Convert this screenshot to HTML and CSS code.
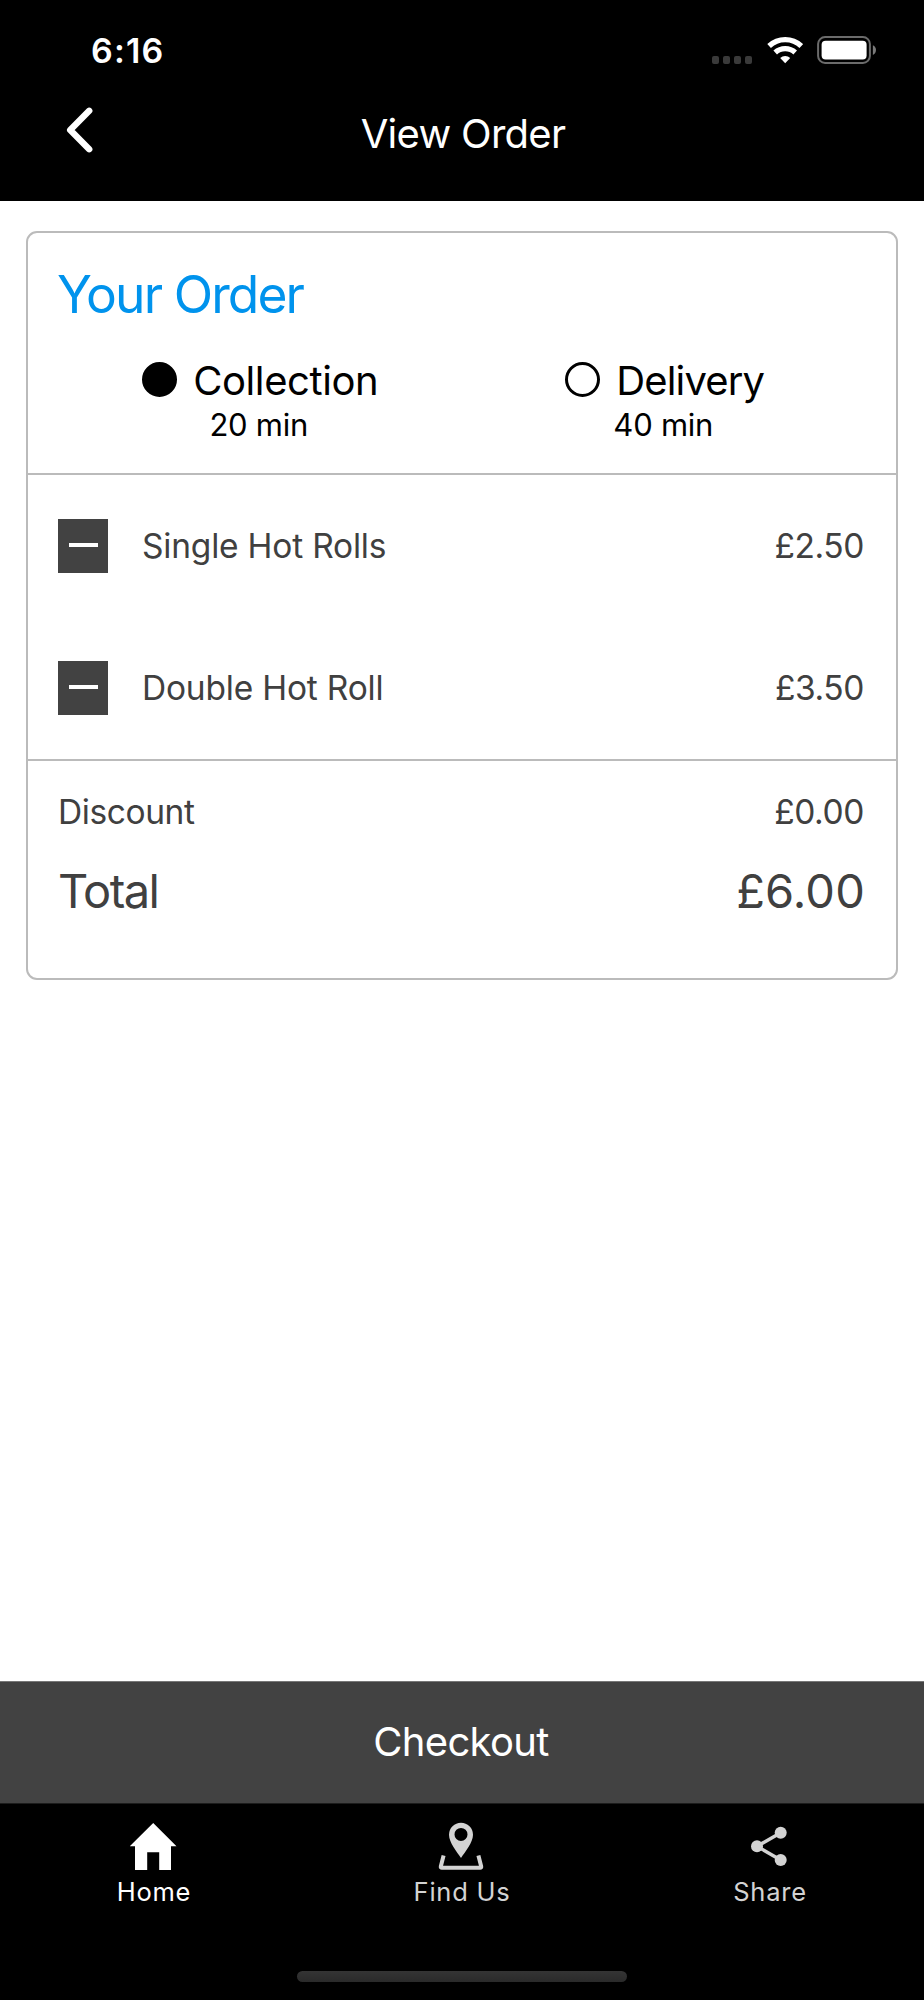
FILE: index.html
```html
<!DOCTYPE html>
<html lang="en">
<head>
<meta charset="utf-8">
<title>View Order</title>
<link rel="stylesheet" href="styles.css">
</head>
<body>
<div class="screen">
  <header class="header">
    <div class="status">
      <span class="status-time">6:16</span>
      <div class="status-icons">
        <div class="signal"><i></i><i></i><i></i><i></i></div>
        <svg class="wifi" width="36" height="28" viewBox="767 36 36 28">
          <path d="M769.1 46A23.6 23.6 0 0 1 801.3 46M775.2 52.5A14.7 14.7 0 0 1 795.2 52.5" fill="none" stroke="#fff" stroke-width="5.3"/>
          <path d="M785.2 63.3L780.2 58A7.3 7.3 0 0 1 790.2 58Z" fill="#fff"/>
        </svg>
        <svg class="battery" width="60" height="28" viewBox="0 0 60 28">
          <rect x="1.1" y="1.1" width="51.8" height="25.8" rx="7" fill="none" stroke="#6b6b6b" stroke-width="2"/>
          <rect x="4.6" y="4.8" width="45" height="18.8" rx="4" fill="#fff"/>
          <path d="M55.9 9.3C60 11 60 17.300 55.9 19Z" fill="#7a7a7a"/>
        </svg>
      </div>
    </div>
    <div class="navbar">
      <svg class="back" width="28" height="48" viewBox="66 106.500 28 48">
        <path d="M89.200 111.300L70.200 130.500L89.200 149.700" fill="none" stroke="#fff" stroke-width="6.400" stroke-linecap="round" stroke-linejoin="round"/>
      </svg>
      <h1 class="title">View Order</h1>
    </div>
  </header>

  <main class="main">
    <section class="card">
      <div class="summary">
        <h2 class="heading">Your Order</h2>
        <div class="options">
          <div class="option">
            <div class="option-label"><span class="radio radio-on"></span><span class="collection">Collection</span></div>
            <div class="option-time">20 min</div>
          </div>
          <div class="option">
            <div class="option-label"><span class="radio"></span><span class="delivery">Delivery</span></div>
            <div class="option-time">40 min</div>
          </div>
        </div>
      </div>
      <div class="items">
        <div class="item"><button class="remove" aria-label="Remove"><span></span></button><span class="item-name">Single Hot Rolls</span><span class="price">£2.50</span></div>
        <div class="item"><button class="remove" aria-label="Remove"><span></span></button><span class="item-name">Double Hot Roll</span><span class="price">£3.50</span></div>
      </div>
      <div class="totals">
        <div class="row"><span class="discount">Discount</span><span class="price">£0.00</span></div>
        <div class="row row-total"><span class="total">Total</span><span class="amount">£6.00</span></div>
      </div>
    </section>
  </main>

  <button class="checkout">Checkout</button>

  <footer class="footer">
    <nav class="tabs">
      <a class="tab tab-active">
        <svg width="48" height="48" viewBox="130 1822 48 48"><path d="M153.200 1823L176.500 1846.300H171V1870H159.200V1852.200H147.200V1870H135V1846.300H129.700Z" fill="#fff"/></svg>
        <span>Home</span>
      </a>
      <a class="tab">
        <svg width="48" height="48" viewBox="438 1822 48 48">
          <path fill-rule="evenodd" d="M461 1857.900C457 1852 449 1842.500 449 1834.700A12 12 0 0 1 473 1834.700C473 1842.500 465 1852 461 1857.900ZM461 1827.900A6.500 6.500 0 1 0 461 1840.900A6.500 6.500 0 1 0 461 1827.900Z" fill="#d3d3d3"/>
          <path d="M443.600 1855.500L440.800 1866.500Q440.600 1867.700 441.800 1867.700H480.200Q481.400 1867.700 481.200 1866.500L478.400 1855.500" fill="none" stroke="#d3d3d3" stroke-width="4"/>
        </svg>
        <span>Find Us</span>
      </a>
      <a class="tab">
        <svg width="48" height="48" viewBox="746 1822 48 48"><path d="M780.700 1832.700L757 1846.300L780.700 1860" fill="none" stroke="#d3d3d3" stroke-width="3.500"/><g fill="#d3d3d3"><circle cx="780.700" cy="1832.700" r="6"/><circle cx="757" cy="1846.300" r="6"/><circle cx="780.700" cy="1860" r="6"/></g></svg>
        <span>Share</span>
      </a>
    </nav>
    <div class="home-indicator"></div>
  </footer>
</div>
</body>
</html>
```

FILE: styles.css
```css
* { box-sizing: border-box; margin: 0; padding: 0; }

body {
  background: #fff;
  color: #404040;
  font-family: Inter, "Liberation Sans", sans-serif;
}

button { border: 0; font-family: inherit; }

.screen { display: flex; flex-direction: column; height: 2000px; }

.header { height: 201px; background: #000; color: #fff; }

.status {
  display: flex;
  justify-content: space-between;
  height: 101px;
  padding: 0 47px 0 91px;
}
.status-time { font-size: 34px; font-weight: 600; line-height: 101px; letter-spacing: 1.2px; }
.status-icons { display: flex; align-items: flex-start; padding-top: 36px; }
.signal { display: flex; gap: 3.5px; margin: 20px 14.500px 0 0; }
.signal i { width: 7.5px; height: 7.5px; border-radius: 2px; background: #3a3a3a; }
.battery { margin-left: 14.300px; }

.navbar { display: grid; grid-template-columns: 1fr auto 1fr; height: 65px; padding: 0 66px; }
.back { margin-top: 5px; }
.title { font-size: 40px; font-weight: 400; line-height: 65px; letter-spacing: -0.7px; padding-left: 2px; }

.main { flex: 1; padding: 30px 26px 0; }

.card { border: 2px solid #bbb; border-radius: 11px; height: 749px; }

.summary { height: 240px; padding: 31px 30px 0 29px; }
.heading { color: #0093ed; font-size: 51.500px; font-weight: 400; line-height: 61px; letter-spacing: -1.9px; }
.options { display: grid; grid-template-columns: 1fr 1fr; margin-top: 32px; color: #000; }
.option-label { display: flex; justify-content: center; align-items: center; padding-left: 2px; font-size: 40px; line-height: 48px; }
.radio { width: 35px; height: 35px; margin: -3px 16px 0 0; border: 3px solid #000; border-radius: 50%; }
.radio-on { background: #000; }
.collection { letter-spacing: -0.39px; }
.delivery { letter-spacing: -0.85px; }
.option-time { font-size: 31px; line-height: 40px; letter-spacing: -0.25px; text-align: center; padding-right: 1px; }

.items { border-top: 2px solid #bbb; }
.item { display: flex; align-items: center; height: 142px; padding: 0 32px 0 30px; font-size: 33.500px; }
.remove { display: flex; align-items: center; justify-content: center; width: 50px; height: 54.500px; padding-bottom: 3px; background: #424242; }
.remove span { width: 29px; height: 4px; background: #fff; }
.item-name { margin-left: 34px; letter-spacing: -0.2px; }
.price { margin-left: auto; font-size: 33.500px; letter-spacing: -0.4px; }

.totals { border-top: 2px solid #bbb; padding: 12px 32px 0 30px; }
.row { display: flex; align-items: center; height: 78px; }
.row-total { height: 79px; }
.discount { font-size: 33.500px; letter-spacing: -0.4px; }
.total { font-size: 47px; letter-spacing: -1.59px; }
.amount { margin-left: auto; margin-right: -1px; font-size: 47px; letter-spacing: 0.18px; }

.checkout {
  height: 122px;
  padding: 0 2px 2px 0;
  border-top: 1px solid #777;
  background: #424242;
  color: #fff;
  font-size: 40px;
  letter-spacing: -0.68px;
}

.footer { height: 197px; border-top: 1px solid #1c1c1c; background: #000; }
.tabs { display: grid; grid-template-columns: repeat(3, 1fr); padding-top: 18px; }
.tab { display: flex; flex-direction: column; align-items: center; color: #d3d3d3; font-size: 25.500px; letter-spacing: 0.75px; line-height: 30px; }
.tab span { margin-top: 7px; }
.tab-active { color: #fff; }
.home-indicator { width: 330px; height: 11px; margin: 64px auto 0; border-radius: 6px; background: linear-gradient(#343434, #2a2a2a); }
```
